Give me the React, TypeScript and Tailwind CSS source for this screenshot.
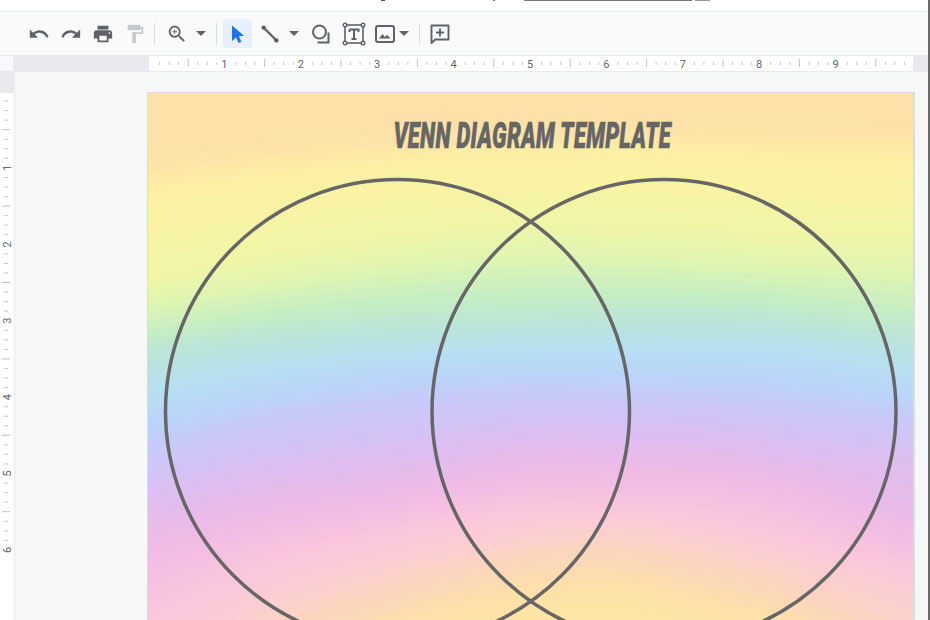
import React from "react";

const XS = [148, 265, 400, 530, 620, 720, 800, 914];
const BANDS: [string, number[]][] = [
  ["#fde1a9", [140, 125, 115, 110, 108, 108, 110, 112]],
  ["#fee4a7", [167, 150, 140, 132, 130, 130, 132, 133]],
  ["#fdf0a4", [190, 175, 160, 152, 150, 152, 155, 157]],
  ["#f9f3a3", [212, 197, 182, 177, 175, 178, 182, 190]],
  ["#eef5a8", [280, 255, 235, 225, 225, 230, 235, 238]],
  ["#ddf5b3", [303, 283, 265, 255, 256, 262, 266, 270]],
  ["#c6eec3", [330, 310, 295, 288, 288, 290, 295, 307]],
  ["#bae5d8", [350, 335, 325, 320, 318, 318, 322, 335]],
  ["#b7dff0", [385, 362, 350, 345, 343, 342, 345, 365]],
  ["#bad5f9", [420, 393, 375, 370, 370, 372, 378, 393]],
  ["#c7caf8", [445, 415, 397, 390, 392, 395, 402, 415]],
  ["#d5c2f5", [475, 448, 430, 417, 417, 420, 428, 440]],
  ["#e3bcee", [505, 478, 462, 442, 442, 445, 458, 470]],
  ["#edbbe6", [535, 507, 487, 465, 465, 468, 482, 520]],
  ["#f5bfe1", [570, 532, 508, 487, 487, 490, 507, 547]],
  ["#fbc7dd", [615, 562, 530, 507, 508, 517, 537, 567]],
  ["#fbcfd0", [680, 602, 560, 533, 525, 542, 562, 595]],
  ["#fcd6bc", [720, 635, 585, 553, 548, 567, 590, 650]],
  ["#fde0aa", [780, 680, 620, 585, 580, 600, 625, 700]],
  ["#fee5a4", [840, 740, 670, 612, 606, 640, 670, 760]],
];

function rgb(h: string) {
  return [1, 3, 5].map((i) => parseInt(h.slice(i, i + 2), 16));
}
function mix(a: string, b: string, t: number) {
  const x = rgb(a);
  const y = rgb(b);
  return `rgb(${x.map((v, i) => Math.round(v + (y[i] - v) * t)).join(",")})`;
}
function curve(ys: number[]) {
  let d = `M${XS[0] - 5} ${ys[0]} L${XS[0]} ${ys[0]}`;
  for (let i = 0; i < XS.length - 1; i++) {
    const p0 = i > 0 ? [XS[i - 1], ys[i - 1]] : [XS[i], ys[i]];
    const p1 = [XS[i], ys[i]];
    const p2 = [XS[i + 1], ys[i + 1]];
    const p3 = i + 2 < XS.length ? [XS[i + 2], ys[i + 2]] : p2;
    const c1 = [p1[0] + (p2[0] - p0[0]) / 6, p1[1] + (p2[1] - p0[1]) / 6];
    const c2 = [p2[0] - (p3[0] - p1[0]) / 6, p2[1] - (p3[1] - p1[1]) / 6];
    d += ` C${c1[0]} ${c1[1]} ${c2[0]} ${c2[1]} ${p2[0]} ${p2[1]}`;
  }
  return d + ` L${XS[XS.length - 1] + 5} ${ys[ys.length - 1]} L920 900 L140 900 Z`;
}

const layers: { d: string; fill: string }[] = [];
BANDS.forEach((band, i) => {
  if (i === 0) return;
  const prev = BANDS[i - 1];
  const steps = 3;
  for (let s = 1; s <= steps; s++) {
    const t = s / steps;
    const ys = band[1].map((v, k) => prev[1][k] + (v - prev[1][k]) * t);
    layers.push({ d: curve(ys), fill: mix(prev[0], band[0], t) });
  }
});

const INCH = 76.4;

function HRuler() {
  const ticks = [];
  for (let i = 1; i < 80; i++) {
    const x = i * (INCH / 8) + 0.5;
    if (x > 762) break;
    if (i % 8 === 0) continue;
    ticks.push(
      i % 4 === 0 ? (
        <rect key={i} x={x} y={3} width={1} height={8} fill="#bdc1c6" />
      ) : (
        <rect key={i} x={x} y={6} width={1} height={3} fill="#c4c7cb" />
      )
    );
  }
  return (
    <svg width="765" height="15" viewBox="0 0 765 15" className="block">
      {ticks}
      {[1, 2, 3, 4, 5, 6, 7, 8, 9].map((n) => (
        <text key={n} x={n * INCH - 1} y={11.5} textAnchor="middle" fontSize="11" fill="#5f6368" fontFamily="Roboto, sans-serif">
          {n}
        </text>
      ))}
    </svg>
  );
}

function VRuler() {
  const ticks = [];
  for (let i = 1; i < 48; i++) {
    const y = i * (INCH / 8) - 2;
    if (i % 8 === 0) continue;
    ticks.push(
      i % 4 === 0 ? (
        <rect key={i} x={2} y={y} width={8} height={1} fill="#bdc1c6" />
      ) : (
        <rect key={i} x={4} y={y} width={4} height={1} fill="#c4c7cb" />
      )
    );
  }
  return (
    <svg width="14" height="527" viewBox="0 0 14 527" className="block">
      {ticks}
      {[1, 2, 3, 4, 5, 6].map((n) => (
        <text
          key={n}
          x={0}
          y={0}
          transform={`translate(10.5 ${n * INCH - 1.5}) rotate(-90)`}
          textAnchor="middle"
          fontSize="11"
          fill="#5f6368"
          fontFamily="Roboto, sans-serif"
        >
          {n}
        </text>
      ))}
    </svg>
  );
}

function Icon({ children, size = 22, color = "#5f6368" }: { children: React.ReactNode; size?: number; color?: string }) {
  return (
    <svg width={size} height={size} viewBox="0 0 24 24" fill={color}>
      {children}
    </svg>
  );
}

function Btn({ children, w = "w-8" }: { children: React.ReactNode; w?: string }) {
  return <div className={`${w} h-[29px] flex items-center justify-center shrink-0`}>{children}</div>;
}

function Caret() {
  return (
    <div className="w-4 h-[29px] flex items-center justify-center shrink-0">
      <svg width="10" height="5" viewBox="0 0 10 5">
        <path d="M0 0h10L5 5z" fill="#5f6368" />
      </svg>
    </div>
  );
}

function Sep() {
  return <div className="w-px h-[22px] bg-[#dadce0] shrink-0" />;
}

export default function App() {
  return (
    <div className="w-[930px] h-[620px] overflow-hidden flex bg-white" style={{ fontFamily: "Roboto, 'Liberation Sans', sans-serif" }}>
      <div className="w-[928px] h-full flex flex-col shrink-0">
        {/* clipped title line */}
        <div className="h-[12px] bg-white border-b border-[#e8eaed] flex items-start shrink-0">
          <div className="ml-[381px] w-[4px] h-[1px] bg-[#555]" />
          <div className="ml-[108px] w-[2px] h-[1px] bg-[#777]" />
          <div className="ml-[29px] w-[168px] h-[1px] bg-[#777]" />
          <div className="ml-[3px] w-[15px] h-[1px] bg-[#999]" />
        </div>

        {/* toolbar */}
        <div className="h-[44px] bg-[#f9fbfb] flex items-center pl-[23px] shrink-0 border-b border-[#e8eaed]">
          <Btn>
            <Icon><path d="M12.5 8c-2.65 0-5.05.99-6.9 2.6L2 7v9h9l-3.62-3.62c1.39-1.16 3.16-1.88 5.12-1.88 3.54 0 6.55 2.31 7.6 5.5l2.37-.78C21.08 11.03 17.15 8 12.5 8z" /></Icon>
          </Btn>
          <Btn>
            <Icon><path d="M18.4 10.6C16.55 8.99 14.15 8 11.5 8c-4.65 0-8.58 3.03-9.96 7.22L3.9 16c1.05-3.19 4.05-5.5 7.6-5.5 1.95 0 3.73.72 5.12 1.88L13 16h9V7l-3.6 3.6z" /></Icon>
          </Btn>
          <Btn>
            <Icon><path d="M19 8H5c-1.66 0-3 1.34-3 3v6h4v4h12v-4h4v-6c0-1.66-1.34-3-3-3zm-3 11H8v-5h8v5zm3-7c-.55 0-1-.45-1-1s.45-1 1-1 1 .45 1 1-.45 1-1 1zm-1-9H6v4h12V3z" /></Icon>
          </Btn>
          <Btn>
            <Icon color="#c6c9cc"><path d="M18 4V3c0-.55-.45-1-1-1H5c-.55 0-1 .45-1 1v4c0 .55.45 1 1 1h12c.55 0 1-.45 1-1V6h1v4H9v11c0 .55.45 1 1 1h2c.55 0 1-.45 1-1v-9h8V4h-3z" /></Icon>
          </Btn>
          <div className="ml-[3px]"><Sep /></div>
          <div className="ml-[6px]">
            <Btn>
              <Icon>
                <path d="M15.5 14h-.79l-.28-.27C15.41 12.59 16 11.11 16 9.5 16 5.91 13.09 3 9.5 3S3 5.91 3 9.5 5.91 16 9.5 16c1.61 0 3.09-.59 4.23-1.57l.27.28v.79l5 4.99L20.49 19l-4.99-5zm-6 0C7.01 14 5 11.99 5 9.5S7.01 5 9.5 5 14 7.01 14 9.5 11.99 14 9.5 14z" />
                <path d="M12 10h-2v2H9v-2H7V9h2V7h1v2h2v1z" />
              </Icon>
            </Btn>
          </div>
          <Caret />
          <div className="ml-[7px]"><Sep /></div>
          <div className="ml-[6px] w-[29px] h-[29px] rounded-[3px] bg-[#e8f0fe] flex items-center justify-center shrink-0">
            <svg width="20" height="20" viewBox="0 0 20 20">
              <path d="M4 1.5v15.5l4-3.6 2.7 5.6 2.7-1.3-2.6-5.5 5.2-.4z" fill="#1a73e8" />
            </svg>
          </div>
          <div className="ml-[2px]">
            <Btn>
              <svg width="18" height="18" viewBox="0 0 18 18">
                <path d="M3 3L15 15" stroke="#5f6368" strokeWidth="2.4" fill="none" />
                <circle cx="2.6" cy="2.6" r="2.2" fill="#5f6368" />
                <circle cx="15.4" cy="15.4" r="2.2" fill="#5f6368" />
              </svg>
            </Btn>
          </div>
          <Caret />
          <div className="ml-[3px]">
            <Btn>
              <svg width="22" height="22" viewBox="0 0 22 22" fill="none" stroke="#5f6368" strokeWidth="2">
                <circle cx="9.5" cy="9" r="6.5" />
                <path d="M18.5 9.5V19.5H7.5" />
              </svg>
            </Btn>
          </div>
          <div className="ml-px">
            <Btn>
              <svg width="24" height="24" viewBox="0 0 24 24" fill="none">
                <rect x="3" y="3" width="18" height="18" stroke="#5f6368" strokeWidth="1.6" />
                <path d="M7.5 7.5h9v2.4M12 7.5v9.5M9.5 17h5M7.5 7.5v2.4" stroke="#5f6368" strokeWidth="2" />
                {[[3, 3], [21, 3], [3, 21], [21, 21]].map(([x, y]) => (
                  <circle key={x * 100 + y} cx={x} cy={y} r="1.8" fill="#f9fbfb" stroke="#5f6368" strokeWidth="1.4" />
                ))}
              </svg>
            </Btn>
          </div>
          <Btn w="w-[30px]">
            <svg width="22" height="22" viewBox="0 0 22 22" fill="none">
              <rect x="2" y="3" width="18" height="16" rx="2" stroke="#5f6368" strokeWidth="2" />
              <path d="M5 15.5l3.5-4.5 2.5 3 2-2.3 3.5 3.8z" fill="#5f6368" />
            </svg>
          </Btn>
          <div className="-ml-[4px]"><Caret /></div>
          <div className="ml-[7px]"><Sep /></div>
          <div className="ml-[4px]">
            <Btn>
              <svg width="24" height="24" viewBox="0 0 24 24" fill="none">
                <path d="M3.5 3.5h17v14H7.2l-3.7 3.6z" stroke="#5f6368" strokeWidth="1.9" strokeLinejoin="round" />
                <path d="M12 6.5v8M8 10.5h8" stroke="#5f6368" strokeWidth="1.9" />
              </svg>
            </Btn>
          </div>
        </div>

        {/* horizontal ruler */}
        <div className="h-[15px] flex shrink-0 border-b border-[#e8eaed] box-content">
          <div className="w-[14px] bg-[#f8f9fa] border-r border-[#e8eaed] box-border shrink-0" />
          <div className="w-[135px] bg-[#e8eaed] shrink-0" />
          <div className="w-[764px] bg-white overflow-hidden shrink-0"><HRuler /></div>
          <div className="flex-1 bg-[#e8eaed]" />
        </div>

        {/* canvas */}
        <div className="flex-1 flex min-h-0">
          <div className="w-[15px] flex flex-col shrink-0 border-r border-[#e8eaed]">
            <div className="h-[21px] bg-[#e8eaed] shrink-0" />
            <div className="flex-1 bg-white overflow-hidden"><VRuler /></div>
          </div>
          <div className="flex-1 bg-[#f6f8f8] pl-[132px] pt-[20px] min-w-0 overflow-hidden">
            <div className="relative w-[768px] h-[530px] border-l border-t border-r-2 border-[#dadce0] box-border">
              <svg width="765" height="529" viewBox="148 93 765 529" className="block">
                <rect x="140" y="85" width="780" height="100" fill={BANDS[0][0]} />
                {layers.map((l, i) => (
                  <path key={i} d={l.d} fill={l.fill} />
                ))}
                <circle cx="397.5" cy="411.5" r="232" fill="none" stroke="#666666" strokeWidth="3.5" />
                <circle cx="664" cy="411.5" r="232" fill="none" stroke="#666666" strokeWidth="3.5" />
              </svg>
              <div className="absolute left-[245px] top-[23px] w-[278px] flex justify-center">
                <span className="whitespace-nowrap text-[37px] leading-[40px] font-black italic text-[#666666] scale-x-[0.595] tracking-[0.5px] [-webkit-text-stroke:0.6px_#666666]" style={{ fontFamily: "Roboto, 'Liberation Sans', sans-serif" }}>
                  VENN DIAGRAM TEMPLATE
                </span>
              </div>
            </div>
          </div>
        </div>
      </div>
      <div className="w-[2px] h-full bg-[#6b6b6b] shrink-0" />
    </div>
  );
}
